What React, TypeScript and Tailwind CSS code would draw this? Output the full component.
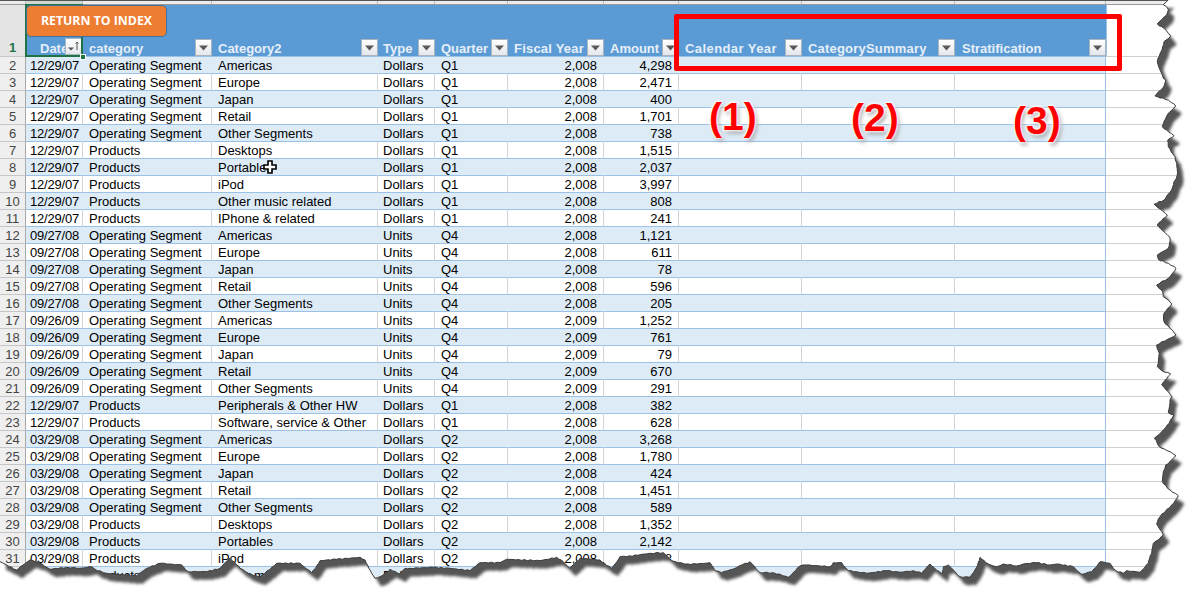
import React from "react";

const GRID = "grid grid-cols-[26px_57px_129px_166px_57px_73px_96px_75px_123px_153px_151px_94px]";

type Row = [string, string, string, string, string, string, string];

const OP = "Operating Segment";
const PR = "Products";
const OT = "Other Segments";
const rows: Row[] = [
  ["12/29/07", OP, "Americas", "Dollars", "Q1", "2,008", "4,298"],
  ["12/29/07", OP, "Europe", "Dollars", "Q1", "2,008", "2,471"],
  ["12/29/07", OP, "Japan", "Dollars", "Q1", "2,008", "400"],
  ["12/29/07", OP, "Retail", "Dollars", "Q1", "2,008", "1,701"],
  ["12/29/07", OP, OT, "Dollars", "Q1", "2,008", "738"],
  ["12/29/07", PR, "Desktops", "Dollars", "Q1", "2,008", "1,515"],
  ["12/29/07", PR, "Portables", "Dollars", "Q1", "2,008", "2,037"],
  ["12/29/07", PR, "iPod", "Dollars", "Q1", "2,008", "3,997"],
  ["12/29/07", PR, "Other music related", "Dollars", "Q1", "2,008", "808"],
  ["12/29/07", PR, "IPhone & related", "Dollars", "Q1", "2,008", "241"],
  ["09/27/08", OP, "Americas", "Units", "Q4", "2,008", "1,121"],
  ["09/27/08", OP, "Europe", "Units", "Q4", "2,008", "611"],
  ["09/27/08", OP, "Japan", "Units", "Q4", "2,008", "78"],
  ["09/27/08", OP, "Retail", "Units", "Q4", "2,008", "596"],
  ["09/27/08", OP, OT, "Units", "Q4", "2,008", "205"],
  ["09/26/09", OP, "Americas", "Units", "Q4", "2,009", "1,252"],
  ["09/26/09", OP, "Europe", "Units", "Q4", "2,009", "761"],
  ["09/26/09", OP, "Japan", "Units", "Q4", "2,009", "79"],
  ["09/26/09", OP, "Retail", "Units", "Q4", "2,009", "670"],
  ["09/26/09", OP, OT, "Units", "Q4", "2,009", "291"],
  ["12/29/07", PR, "Peripherals & Other HW", "Dollars", "Q1", "2,008", "382"],
  ["12/29/07", PR, "Software, service & Other", "Dollars", "Q1", "2,008", "628"],
  ["03/29/08", OP, "Americas", "Dollars", "Q2", "2,008", "3,268"],
  ["03/29/08", OP, "Europe", "Dollars", "Q2", "2,008", "1,780"],
  ["03/29/08", OP, "Japan", "Dollars", "Q2", "2,008", "424"],
  ["03/29/08", OP, "Retail", "Dollars", "Q2", "2,008", "1,451"],
  ["03/29/08", OP, OT, "Dollars", "Q2", "2,008", "589"],
  ["03/29/08", PR, "Desktops", "Dollars", "Q2", "2,008", "1,352"],
  ["03/29/08", PR, "Portables", "Dollars", "Q2", "2,008", "2,142"],
  ["03/29/08", PR, "iPod", "Dollars", "Q2", "2,008", "1,728"],
  ["03/29/08", PR, "Other music related", "Dollars", "Q2", "2,008", "808"],
];

// Torn edge, traced from the picture: [zoomX, zoomY] in 3x crops.
const z = (ox: number, oy: number, pts: number[][]) => pts.map(([x, y]) => [ox + x / 3, oy + y / 3]);
const edge: number[][] = [
  ...z(1100, 0, [[205,0],[190,14],[205,28],[200,45],[172,72],[192,85],[205,100],[212,108],[192,125],[186,150],[172,185],[178,205],[190,235],[197,240],[190,262],[165,288],[205,300],[227,318],[205,340],[187,380],[205,395],[222,407],[203,420],[205,440],[225,470],[230,490],[232,525],[222,545],[215,570],[193,600]]),
  ...z(1100, 200, [[163,12],[172,22],[202,45],[172,75],[188,92],[210,112],[205,145],[172,165],[175,178],[205,190],[228,205],[205,235],[170,255],[188,275],[190,290],[205,300],[215,312],[192,340],[192,365],[210,385],[228,405],[170,435],[178,460],[172,500],[185,512],[212,522],[185,555],[205,575],[215,590],[210,600]]),
  ...z(1100, 400, [[205,38],[222,45],[208,70],[185,95],[163,115],[178,140],[210,155],[228,167],[215,180],[197,195],[190,215],[187,245],[210,270],[235,287],[215,315],[180,350],[170,372],[190,405],[160,430],[155,460],[145,490],[120,517],[80,512],[70,520],[48,512],[30,490],[0,485]]),
  ...z(900, 540, [[575,95],[545,103],[520,80],[470,72],[450,75],[410,68],[370,72],[350,78],[310,72],[290,80],[265,72],[240,52],[225,90],[210,112],[180,110],[160,90],[145,75],[130,80],[125,102],[90,72],[65,100],[40,92],[0,97]]),
  ...z(600, 540, [[860,92],[800,100],[770,95],[745,92],[725,68],[700,68],[690,80],[620,75],[600,78],[565,112],[520,98],[480,98],[450,65],[425,75],[400,87],[365,98],[345,92],[330,68],[290,72],[265,72],[235,68],[215,62],[190,38],[150,40],[80,50],[60,50],[35,85],[0,60]]),
  ...z(300, 540, [[840,55],[810,85],[790,65],[770,52],[720,62],[620,58],[600,68],[540,68],[510,92],[450,85],[400,82],[330,85],[315,85],[300,102],[270,88],[240,110],[225,115],[195,60],[180,52],[110,58],[60,62],[35,98],[0,70]]),
  ...z(0, 540, [[830,70],[780,112],[745,100],[720,85],[690,55],[660,85],[620,95],[565,95],[545,75],[480,70],[440,85],[410,108],[320,100],[285,88],[275,80],[240,85],[200,82],[150,88],[120,70],[90,60],[50,90],[20,75],[0,65]]),
];

function roughen(pts: number[][]) {
  const out: number[][] = [];
  let k = 0;
  for (let i = 0; i < pts.length - 1; i++) {
    const [a, b] = pts[i];
    const [c, d] = pts[i + 1];
    const n = Math.max(1, Math.round(Math.hypot(c - a, d - b) / 3));
    for (let j = 0; j < n; j++) {
      k++;
      const t = j / n;
      const jx = j === 0 ? 0 : Math.sin(k * 12.9898) * 0.5;
      const jy = j === 0 ? 0 : Math.sin(k * 78.233) * 0.5;
      out.push([a + (c - a) * t + jx, b + (d - b) * t + jy]);
    }
  }
  out.push(pts[pts.length - 1]);
  return out;
}

const inner = "M" + roughen(edge).map(([x, y]) => `${x.toFixed(1)} ${y.toFixed(1)}`).join("L");
const innerClosed = inner + "L0 0Z";
const outside = "M0 0H1200V601H0Z" + innerClosed;

function FilterButton({ sort }: { sort?: boolean }) {
  return (
    <span className="relative flex h-[17px] w-[17px] shrink-0 items-center justify-center border border-[#a9b4be] bg-gradient-to-b from-white to-[#e4e7ea]">
      {sort ? (
        <svg width="15" height="15" viewBox="0 0 15 15">
          <path d="M2 8.5h6l-3 3z" fill="#555" />
          <path d="M11 11V3M9.6 4.6 11 3l1.4 1.6" fill="none" stroke="#555" strokeWidth="1" />
        </svg>
      ) : (
        <svg width="9" height="6" viewBox="0 0 9 6">
          <path d="M0 0.5h9L4.5 5.5z" fill="#595959" />
        </svg>
      )}
    </span>
  );
}

const headers = [
  { t: "category", c: "pl-[6px]" },
  { t: "Category2", c: "pl-[6px]" },
  { t: "Type", c: "pl-[5px]" },
  { t: "Quarter", c: "pl-[6px]" },
  { t: "Fiscal Year", c: "pl-[6px] tracking-[0.2px]" },
  { t: "Amount", c: "pl-[6px]" },
  { t: "Calendar Year", c: "pl-[6px] tracking-[0.42px]" },
  { t: "CategorySummary", c: "pl-[6px] tracking-[0.2px]" },
  { t: "Stratification", c: "pl-[7px]" },
];

const stripCols = Array.from({ length: 12 });

function DataRow({ n, r }: { n: number; r: Row }) {
  const blue = n % 2 === 0;
  const bg = blue ? "bg-[#ddebf7]" : "bg-white";
  const line = blue ? "border-r-transparent" : "border-r-[#d4d4d4]";
  const cell = `h-[17px] overflow-hidden whitespace-nowrap border-b border-r border-b-[#9bc2e6] leading-[18px] ${bg} ${line}`;
  return (
    <div className={GRID}>
      <div className="h-[17px] border-b border-r border-b-[#c6c6c6] border-r-[#a8a8a8] bg-[#efefef] text-center leading-[18px] text-[#444]">{n}</div>
      <div className={`${cell} pl-[4px] tracking-[-0.2px]`}>{r[0]}</div>
      <div className={`${cell} pl-[6px]`}>{r[1]}</div>
      <div className={`${cell} pl-[6px]`}>{r[2]}</div>
      <div className={`${cell} pl-[5px]`}>{r[3]}</div>
      <div className={`${cell} pl-[6px]`}>{r[4]}</div>
      <div className={`${cell} pr-[6px] text-right`}>{r[5]}</div>
      <div className={`${cell} pr-[6px] text-right`}>{r[6]}</div>
      <div className={cell} />
      <div className={cell} />
      <div className={`h-[17px] border-b border-r border-b-[#9bc2e6] border-r-[#9bc2e6] ${bg}`} />
      <div className="h-[17px] border-b border-b-[#d0d0d0] bg-white" />
    </div>
  );
}

export default function App() {
  return (
    <div className="relative h-[601px] w-[1200px] overflow-hidden bg-white font-['Liberation_Sans',Arial,sans-serif] text-[13px] text-black">
      {/* column header strip */}
      <div className={`${GRID} h-[5px] border-b border-t border-b-[#9a9a9a] border-t-[#555]`}>
        {stripCols.map((_, i) => (
          <div key={i} className={i === 1 ? "border-r border-r-[#bbb] bg-[#cfd8d2]" : "border-r border-r-[#bbb] bg-[#ececec]"} />
        ))}
      </div>

      {/* table header */}
      <div className={`${GRID} h-[52px]`}>
        <div className="flex items-end justify-center border-b border-r border-b-[#c6c6c6] border-r-[#a8a8a8] bg-[#e4e4e4] font-bold leading-[16px] text-[#217346]">
          1
        </div>
        <div className="relative flex items-end overflow-hidden border-b border-b-[#9bc2e6] bg-[#5b9bd5] pl-[14px] font-bold leading-[16px] text-[#e6eff8]">
          <span className="-mb-[1px]">Date</span>
          <span className="absolute bottom-[1px] right-[1px]">
            <FilterButton sort />
          </span>
        </div>
        {headers.map((h) => (
          <div
            key={h.t}
            className={`flex items-end justify-between overflow-hidden whitespace-nowrap border-b border-b-[#9bc2e6] bg-[#5b9bd5] font-bold leading-[16px] text-[#e6eff8] ${h.c}`}
          >
            <span className="-mb-[1px]">{h.t}</span>
            <FilterButton />
          </div>
        ))}
        <div className="border-b border-l border-b-[#d0d0d0] border-l-[#9bc2e6] bg-white" />
      </div>

      {/* rows */}
      {rows.map((r, i) => (
        <DataRow key={i} n={i + 2} r={r} />
      ))}

      {/* selected cell */}
      <div className="pointer-events-none absolute left-[25px] top-[4px] h-[53px] w-[58px] border-2 border-[#217346]" />
      <div className="absolute left-[80px] top-[54px] h-[6px] w-[6px] border border-white bg-[#217346]" />

      {/* floating button */}
      <div className="absolute left-[26px] top-[5px] flex h-[32px] w-[141px] items-center justify-center rounded-[5px] border border-[#41719c] bg-[#ed7d31] font-['Open_Sans',sans-serif] text-[12.3px] font-bold text-white">
        RETURN TO INDEX
      </div>

      {/* annotations */}
      <div className="absolute left-[674px] top-[14px] h-[57px] w-[448px] rounded-[2px] border-[5px] border-[#ff0000]" />
      {[
        { t: "(1)", c: "left-[709px] top-[94px]" },
        { t: "(2)", c: "left-[851px] top-[95px]" },
        { t: "(3)", c: "left-[1013px] top-[98px]" },
      ].map((a) => (
        <div
          key={a.t}
          className={`absolute ${a.c} text-[39px] font-bold leading-[45px] text-[#ff0000] [text-shadow:0_0_2px_#fff,0_0_3px_#fff,0_0_4px_#fff,2px_3px_4px_#999]`}
        >
          {a.t}
        </div>
      ))}

      {/* cell cursor */}
      <svg className="absolute left-[263px] top-[160px]" width="14" height="14" viewBox="0 0 14 14">
        <path d="M5 1h4v4h4v4H9v4H5V9H1V5h4z" fill="#fff" stroke="#000" strokeWidth="1.6" />
      </svg>

      {/* torn paper edge */}
      <svg className="absolute inset-0" width="1200" height="601" viewBox="0 0 1200 601">
        <defs>
          <clipPath id="outsideClip">
            <path d={outside} clipRule="evenodd" />
          </clipPath>
          <filter id="tornBlur" x="-5%" y="-5%" width="110%" height="110%">
            <feGaussianBlur stdDeviation="1.6" />
          </filter>
        </defs>
        <path d={outside} fill="#fff" fillRule="evenodd" />
        <g clipPath="url(#outsideClip)">
          <path d={innerClosed} transform="translate(6 8)" fill="#555" filter="url(#tornBlur)" />
        </g>
        <path d={inner} fill="none" stroke="#3a3a3a" strokeWidth="1" />
      </svg>
    </div>
  );
}
